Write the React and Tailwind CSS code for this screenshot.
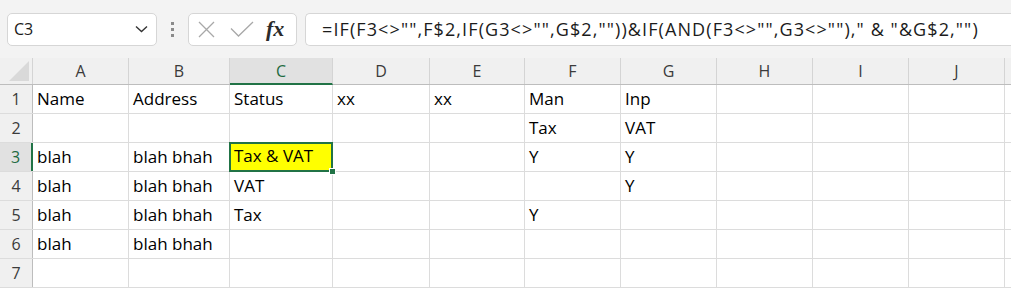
import React from 'react';

const cols = [
  { key: 'A', w: 96 },
  { key: 'B', w: 101 },
  { key: 'C', w: 103 },
  { key: 'D', w: 97 },
  { key: 'E', w: 95 },
  { key: 'F', w: 96 },
  { key: 'G', w: 96 },
  { key: 'H', w: 96 },
  { key: 'I', w: 96 },
  { key: 'J', w: 96 },
  { key: '', w: 96 },
];

const data = [
  ['Name', 'Address', 'Status', 'xx', 'xx', 'Man', 'Inp'],
  ['', '', '', '', '', 'Tax', 'VAT'],
  ['blah', 'blah bhah', 'Tax & VAT', '', '', 'Y', 'Y'],
  ['blah', 'blah bhah', 'VAT', '', '', '', 'Y'],
  ['blah', 'blah bhah', 'Tax', '', '', 'Y', ''],
  ['blah', 'blah bhah', '', '', '', '', ''],
  ['', '', '', '', '', '', ''],
];

const cellFont = { fontFamily: '"Open Sans", "Noto Sans", sans-serif' };

export default function App() {
  return (
    <div className="w-[1011px] h-[291px] overflow-hidden bg-white" style={cellFont}>
      {/* formula bar */}
      <div className="h-[58px] bg-[#f3f3f3] flex items-center pl-[7px] gap-0">
        <div className="w-[150px] h-[33px] bg-white border border-[#d6d6d6] rounded-[5px] flex items-center justify-between pl-[6px] pr-[8px]">
          <span className="text-[16px] text-[#1b1b1b]">C3</span>
          <svg width="13" height="8" viewBox="0 0 13 8" fill="none" stroke="#333" strokeWidth="1.4">
            <path d="M1 1.5l5.5 5 5.5-5" />
          </svg>
        </div>
        <div className="w-[31px] flex flex-col items-center gap-[3px]">
          <span className="w-[3px] h-[3px] bg-[#8a8a8a]" />
          <span className="w-[3px] h-[3px] bg-[#8a8a8a]" />
          <span className="w-[3px] h-[3px] bg-[#8a8a8a]" />
        </div>
        <div className="w-[109px] h-[33px] bg-white border border-[#d6d6d6] rounded-[5px] flex items-center pl-[9px] gap-[15px]">
          <svg width="17" height="17" viewBox="0 0 17 17" stroke="#a8a8a8" strokeWidth="1.3">
            <path d="M1 1l15 15M16 1L1 16" />
          </svg>
          <svg width="24" height="16" viewBox="0 0 24 16" fill="none" stroke="#a8a8a8" strokeWidth="1.3">
            <path d="M1 7.5l7.5 7.5L23 1" />
          </svg>
          <span className="text-[22px] italic font-bold text-[#2b2b2b] leading-none -ml-[3px]" style={{ fontFamily: '"Liberation Serif", serif' }}>
            fx
          </span>
        </div>
        <div className="ml-[8px] flex-1 h-[33px] bg-white border border-r-0 border-[#d6d6d6] rounded-l-[5px] flex items-center pl-[16px] overflow-hidden">
          <span className="text-[18px] text-[#1b1b1b] whitespace-nowrap tracking-[1.1px]">
            =IF(F3&lt;&gt;"",F$2,IF(G3&lt;&gt;"",G$2,""))&amp;IF(AND(F3&lt;&gt;"",G3&lt;&gt;""),"  &amp; "&amp;G$2,"")
          </span>
        </div>
      </div>

      {/* column headers */}
      <div className="flex h-[27px] bg-[#f0f0f0] border-b border-[#bdbdbd]">
        <div className="w-[33px] shrink-0 border-r border-[#d4d4d4] flex items-end justify-end pr-[3px] pb-[3px]">
          <svg width="20" height="20" viewBox="0 0 20 20">
            <path d="M20 0V20H0Z" fill="#d9d9d9" />
          </svg>
        </div>
        {cols.map((c, i) => (
          <div
            key={i}
            style={{ width: c.w }}
            className={
              c.key === 'C'
                ? 'shrink-0 flex items-center justify-center text-[16px] text-[#1e6b41] bg-[#e1e1e1] border-r border-[#d4d4d4] border-b-2 border-b-[#217346] -mb-[1px]'
                : 'shrink-0 flex items-center justify-center text-[16px] text-[#3b3b3b] border-r border-[#d4d4d4]'
            }
          >
            {c.key}
          </div>
        ))}
      </div>

      {/* rows */}
      {data.map((row, r) => (
        <div key={r} className="flex h-[29px] border-b border-[#dcdcdc]">
          <div
            className={
              r === 2
                ? 'w-[33px] shrink-0 bg-[#e1e1e1] border-r-2 border-[#217346] flex items-center justify-center text-[16px] text-[#1e6b41]'
                : 'w-[33px] shrink-0 bg-[#f0f0f0] border-r border-[#bdbdbd] flex items-center justify-center text-[16px] text-[#3b3b3b]'
            }
          >
            {r + 1}
          </div>
          {cols.map((c, ci) => {
            const v = row[ci] || '';
            const selected = r === 2 && c.key === 'C';
            if (selected) {
              return (
                <div key={ci} style={{ width: c.w }} className="shrink-0 relative -mt-[1px] h-[30px]">
                  <div className="absolute inset-0 -left-[1px] border-2 border-[#217346] bg-[#ffff00] flex items-end pl-[3px] pb-[2px] text-[17px] text-black">
                    {v}
                  </div>
                  <div className="absolute -right-[3px] -bottom-[3px] w-[7px] h-[7px] bg-[#217346] border border-white" />
                </div>
              );
            }
            return (
              <div
                key={ci}
                style={{ width: c.w }}
                className="shrink-0 border-r border-[#dcdcdc] flex items-end pl-[4px] pb-[2px] text-[17px] text-black whitespace-nowrap"
              >
                {v}
              </div>
            );
          })}
        </div>
      ))}
    </div>
  );
}
